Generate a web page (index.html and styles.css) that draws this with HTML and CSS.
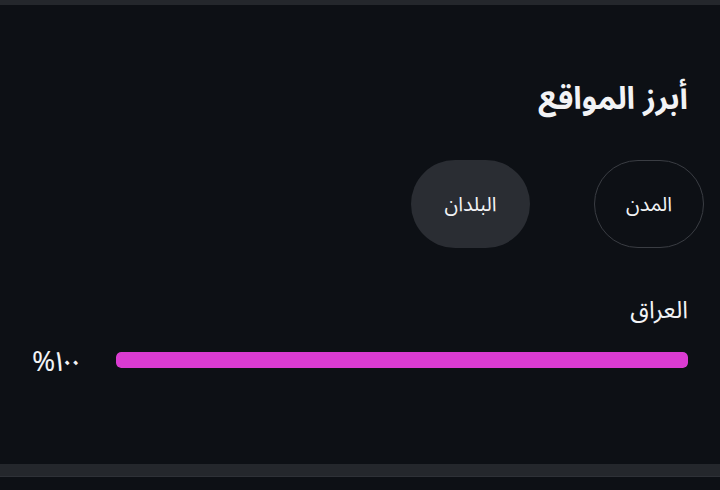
FILE: index.html
```html
<!DOCTYPE html>
<html lang="ar" dir="rtl">
<head>
<meta charset="utf-8">
<link rel="stylesheet" href="styles.css">
</head>
<body>
<div class="topbar"></div>
<main class="panel">
  <h2 class="title">أبرز المواقع</h2>
  <div class="tabs">
    <button class="tab tab-outline">المدن</button>
    <button class="tab tab-active">البلدان</button>
  </div>
  <div class="item">
    <div class="item-label">العراق</div>
    <div class="item-row">
      <div class="track"><div class="fill" style="width:100%"></div></div>
      <div class="pct">١٠٠%</div>
    </div>
  </div>
</main>
<div class="bottombar"></div>
</body>
</html>
```
FILE: styles.css
```css
html, body {
  margin: 0;
  padding: 0;
  background: #0d1015;
  color: #f2f3f5;
  font-family: "Noto Sans Arabic UI", "Noto Sans Arabic", "DejaVu Sans", sans-serif;
  width: 720px;
  height: 490px;
  overflow: hidden;
}
.topbar {
  height: 5px;
  background: #24272c;
}
.panel {
  height: 459px;
  box-sizing: border-box;
  padding: 69px 32px 0 32px;
}
.title {
  margin: 0;
  font-size: 31px;
  font-weight: bold;
  line-height: 46px;
}
.tabs {
  display: flex;
  gap: 64px;
  margin: 40px -16px 0 0;
}
.tab {
  height: 88px;
  border-radius: 44px;
  font-family: inherit;
  font-size: 20px;
  color: #f2f3f5;
  padding: 0 0 2px 0;
}
.tab-outline {
  width: 110px;
  background: transparent;
  border: 1.5px solid #3a3d43;
}
.tab-active {
  width: 119px;
  background: #2a2d33;
  border: none;
}
.item {
  margin-top: 45px;
}
.item-label {
  font-size: 24px;
  line-height: 32px;
}
.item-row {
  display: flex;
  align-items: center;
  gap: 32px;
  margin-top: 20px;
}
.track {
  flex: 1;
  height: 16px;
  border-radius: 5px;
  background: #2a2d33;
  overflow: hidden;
}
.fill {
  height: 100%;
  background: #da3bd1;
  border-radius: 5px;
}
.pct {
  width: 52px;
  font-size: 28px;
  line-height: 30px;
  letter-spacing: 1.5px;
  text-align: left;
}
.bottombar {
  height: 12px;
  background: #24272c;
  border-bottom: 1px solid #2e3137;
}
```
